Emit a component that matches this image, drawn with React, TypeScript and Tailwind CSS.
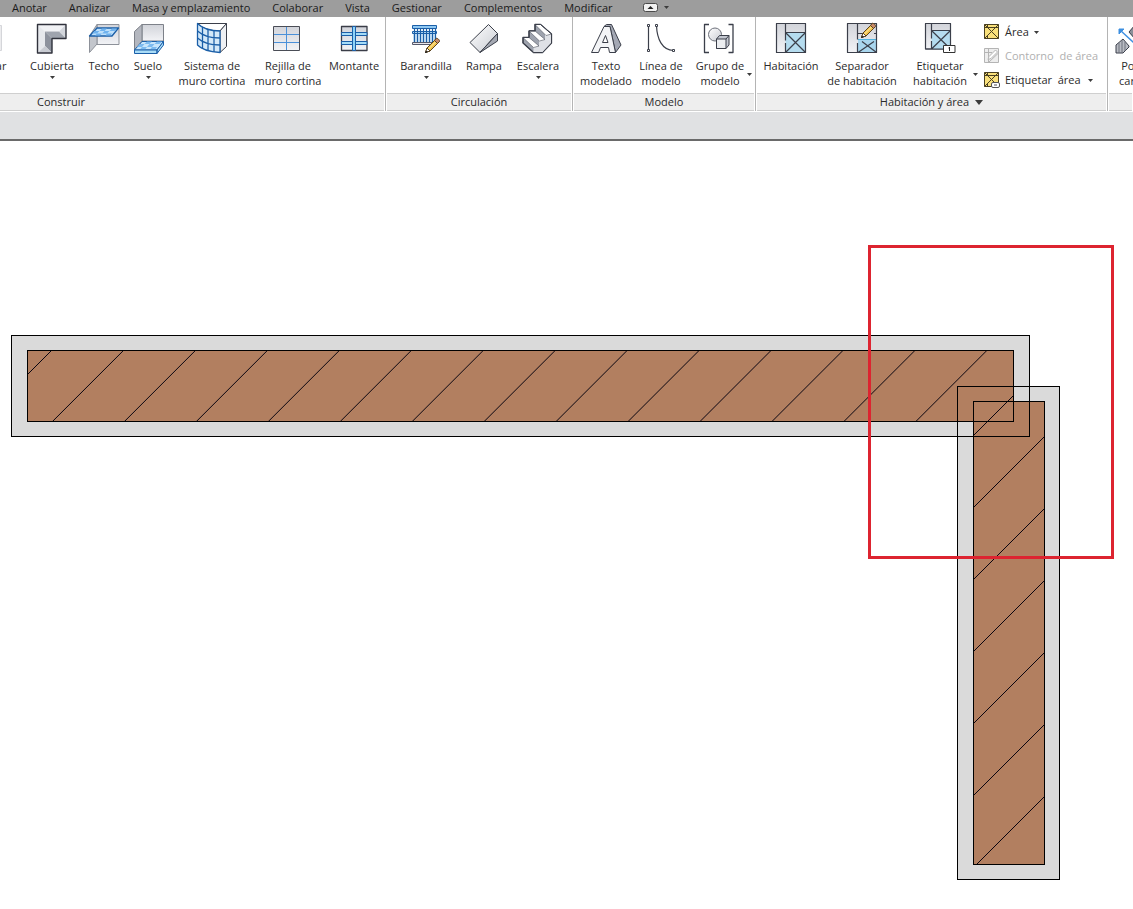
import type { ReactNode } from "react";
import clsx from "clsx";

const INK = "#3b3f4a";
const BLUE = "#1b5fa8";

const tabs = [
  "Anotar",
  "Analizar",
  "Masa y emplazamiento",
  "Colaborar",
  "Vista",
  "Gestionar",
  "Complementos",
  "Modificar",
];

/* Icons */

function Icon({ children }: { children: ReactNode }) {
  return (
    <svg
      className="h-8 w-8 shrink-0 overflow-visible"
      viewBox="0 0 32 32"
      fill="none"
      stroke={INK}
      strokeWidth="1"
      strokeLinejoin="round"
      aria-hidden="true"
    >
      <defs>
        <linearGradient id="steel" x1="0" y1="0" x2="1" y2="1">
          <stop offset="0" stopColor="#ffffff" />
          <stop offset="1" stopColor="#c9ccd3" />
        </linearGradient>
        <linearGradient id="steelDown" x1="0" y1="0" x2="0" y2="1">
          <stop offset="0" stopColor="#d2d4da" />
          <stop offset="1" stopColor="#f2f3f6" />
        </linearGradient>
      </defs>
      {children}
    </svg>
  );
}

function Pencil({ x, y }: { x: number; y: number }) {
  return (
    <g transform={`translate(${x} ${y})`}>
      <path d="M0.5 14.5 2 10 11 1l3 3-9 9z" fill="#f3c44c" stroke="#5a4320" />
      <path d="M3.5 11 11.5 3" stroke="#fdeeb0" />
      <path d="M0.5 14.5 2 10l3 3z" fill="#fff" stroke="#5a4320" />
      <path d="M9.5 2.5 11 .5c1-1 4 1.500 3.500 3l-2 2z" fill="#c98a6a" stroke="#5a4320" />
      <path d="M.5 14.500l1-1.500 .8.8z" fill="#222" stroke="#222" />
    </g>
  );
}

const PilarIcon = () => (
  <Icon>
    <path d="M12 2.500h10.500v25H12z" fill="#ececee" stroke="#d5d6da" />
  </Icon>
);

const CubiertaIcon = () => (
  <Icon>
    <path d="M1.500 1.500 9 8.500h14l7-7z" fill="#f1f2f5" stroke="none" />
    <path d="M23 8.500l7-7v14z" fill="#d3d6dc" stroke="none" />
    <path d="M9 8.500h14l7 7H16z" fill="#9fa4ae" stroke="none" />
    <path d="M1.500 1.500 9 8.500V23l-7.500 7z" fill="#e6e8ec" stroke="none" />
    <path d="M9 8.500l7 7V30L9 23z" fill="#8d929d" stroke="none" />
    <path d="M1.500 30 9 23l7 7z" fill="#c8cbd2" stroke="none" />
    <path d="M1.500 1.500h28.500v14H16V30H1.500z" stroke="#30323c" strokeWidth="1.400" />
  </Icon>
);

const TechoIcon = () => (
  <Icon>
    <path d="M9 1.500h22v20H9z" fill="url(#steelDown)" stroke="#8d9199" />
    <path d="M1.500 13 9 1.500V21l-7.500 8.500z" fill="#c3c6cc" stroke="#8d9199" />
    <path d="M1.500 13 9 5h21.500L24 13z" fill="#bfe0fa" stroke={BLUE} strokeWidth="1.300" />
    <path d="M6.500 8h5L9 10.500H4zM14 5.500h5L16.500 8h-5zM16.500 8h5L19 10.500h-5zM24 5.500h5L26.500 8h-5zM9 10.500h5L12 12.500H7zM19 10.500h5l-1.500 2h-5z" fill="#6fb2ee" stroke="none" />
  </Icon>
);

const SueloIcon = () => (
  <Icon>
    <path d="M10 1.500h21.500V18H10z" fill="url(#steelDown)" stroke="#7d8189" />
    <path d="M2.500 8.500 10 1.500V18l-7.500 9z" fill="#b4b7bf" stroke="#7d8189" />
    <path d="M2.500 27 10 18.500h21.500L25 27z" fill="#c9e6fc" stroke={BLUE} />
    <path d="M7.500 21h5L10 24H5zM15 18.500h5L17.500 21h-5zM17.500 21h5L20 24h-5zM25 18.500h5L27.500 21h-5zM10 24h5l-2 2.500H8zM20 24h5l-2 2.500h-5z" fill="#7cbaf0" stroke="none" />
    <path d="M2.500 27H25v3.500H2.500zM25 27l6.500-8.500V22L25 30.500z" fill="#a9dcf7" stroke={BLUE} />
  </Icon>
);

const MuroCortinaIcon = () => (
  <Icon>
    <path d="M1.500.5H30.500L24 8C16 8 7 6 1.500.5z" fill="#fff" stroke={INK} />
    <path d="M24 8 30.500.5V23.500L24 29.500z" fill="#eef0f3" stroke={INK} />
    <path d="M1.500.5C7 6 16 8 24 8v21.500C16 29 7 28 1.500 22z" fill="#d4e9f9" stroke={BLUE} strokeWidth="1.300" />
    <path d="M6.500 4v22M12 6.500V28M18 7.500V29M1.500 8C7 13 16 15 24 15M1.500 15C7 20 16 22 24 22" stroke={BLUE} strokeWidth="1.300" />
  </Icon>
);

const RejillaIcon = () => (
  <Icon>
    <path d="M1.500 3.500h26v24h-26z" fill="url(#steelDown)" stroke="#4a4d56" />
    <path d="M14.500 4v23M2 11.500h25M2 19.500h25" stroke="#4a90d9" />
  </Icon>
);

const MontanteIcon = () => (
  <Icon>
    <path d="M3.500 3.500h25.500v24H3.500z" fill="url(#steelDown)" stroke="#3a3d47" strokeWidth="1.300" />
    <path d="M3.500 9.500H29v3H3.500zM3.500 18.500H29v3H3.500z" fill="#a5dcf7" stroke={BLUE} />
    <path d="M14.500 3.500h3v24h-3z" fill="#8fd3f7" stroke={BLUE} />
  </Icon>
);

const BarandillaIcon = () => (
  <Icon>
    <path d="M3 8h23v11H3z" fill="#cfe6f8" stroke="none" />
    <path d="M2.500 2.500h24v3h-24z" fill="#8fc8f2" stroke={BLUE} />
    <path d="M2.500 8.500h24v2h-24z" fill="#b9def7" stroke={BLUE} />
    <path d="M4.500 5v14M7.500 5v14M10.500 5v14M13.500 5v14M16.500 5v14M19.500 5v14M22.500 5v14M25.500 5v14" stroke={BLUE} strokeWidth="1.200" />
    <path d="M2.500 19.500h24v2h-24z" fill="#e8e8ee" stroke="#55586a" />
    <Pencil x={15} y={15} />
  </Icon>
);

const RampaIcon = () => (
  <Icon>
    <path d="M20.500 1.500 29.500 10.500 12 29.500 2 19.500z" fill="url(#steel)" />
    <path d="M29.500 10.500V18L12 29.500z" fill="#a4a8b2" />
  </Icon>
);

const EscaleraIcon = () => (
  <Icon>
    <path d="M13 1.500h5.500l11 9.500v9l-9 9.500h-9L1 20v-5.500h6V8h6z" fill="#9ea3ae" strokeWidth="1.300" />
    <path d="M29.500 11v9l-9 9.500h-9V24l5.500-1v-5.500l6-1V12z" fill="#dfe1e6" stroke="none" />
    <path d="M13 1.500h5.500L29.500 11 24 12.500zM7 8h6l10 8.500-5.500 1.500zM1 14.500h6L17 23l-5.500 1.500z" fill="#fff" strokeWidth=".5" />
    <path d="M13 1.500h5.500l11 9.500v9l-9 9.500h-9L1 20v-5.500h6V8h6z" />
  </Icon>
);

const TextoIcon = () => (
  <Icon>
    <path d="M14 3.500 16.500 1.500h5L31 22l-5.500 7.500L20 3.500z" fill="#a4a8b4" />
    <path d="M14 3.500h6l5.500 26H19.500L18.500 24.500H10.500L8.500 29.500h-7zM15.500 12.500 12.500 19.500H18z" fill="#f3f4f6" fillRule="evenodd" />
  </Icon>
);

const LineaIcon = () => (
  <Icon>
    <path d="M3.500 2.500v25M11.500 2.500C12 16 17 27 28.500 27.500" strokeWidth="1.200" />
    <path d="M2.500 1.500h2v2h-2zM2.500 26.500h2v2h-2zM10.500 1.500h2v2h-2zM27.500 26.500h2v2h-2z" fill="#fff" />
  </Icon>
);

const GrupoIcon = () => (
  <Icon>
    <path d="M5 1.500H.5v28H5M24.500 1.500h4.500v28h-4.500" strokeWidth="1.300" />
    <circle cx="11" cy="11.500" r="6.500" fill="url(#steel)" stroke="#6d717b" />
    <path d="M12.500 16l3-3.500h9.500V22l-3 3.500h-9.500z" fill="#c3c7d0" />
    <path d="M12.500 16h9.500v9.500h-9.500z" fill="#eceef1" />
    <path d="M22 16l3-3.500" />
  </Icon>
);

const HabitacionIcon = () => (
  <Icon>
    <path d="M1.500.5h29v29h-29z" fill="url(#steelDown)" />
    <path d="M10.500 9.500h20v20h-20z" fill="#b5dcef" stroke="none" />
    <path d="M1.500.5h29v29h-29zM10.500.5v17M10.500 20v9.500M10.500 9.500h20M10.500 9.500l20 20M30.500 9.500l-20 20" strokeWidth="1.200" />
  </Icon>
);

const SeparadorIcon = () => (
  <Icon>
    <path d="M1.500.5h29v29h-29z" fill="url(#steelDown)" />
    <path d="M12 17h18.500v12.500H12z" fill="#a9d6ee" stroke="none" />
    <path d="M12 16.500h18.500" stroke="#52b4e0" />
    <path d="M1.500.5h29v29h-29zM11.500.5v16M11.500 20v9.500M12 10.500h6M28 10.500h2.500M12 29.500l16-11M30.500 29.500 16 18.500" strokeWidth="1.200" />
    <Pencil x={15} y={0} />
  </Icon>
);

const EtiquetarIcon = () => (
  <Icon>
    <path d="M1.500.5h25v25.500h-25z" fill="url(#steelDown)" />
    <path d="M7.500 7.500h19V26h-19z" fill="#b5dcef" stroke="none" />
    <path d="M1.500.5h25v25.500h-25zM7.500.5v15M7.500 18v8M7.500 7.500h19M7.500 7.500l19 18.500M26.500 7.500l-19 18.500" strokeWidth="1.200" />
    <path d="M19.500 22.500h11.500v7H19.500z" fill="#fff" stroke="#333" />
    <path d="M25.500 24v4M24.500 25h1" stroke="#222" />
  </Icon>
);

const PorCaraIcon = () => (
  <Icon>
    <path d="M2 22 9 16l6 7v1l-6 6H2z" fill="#b9bcc3" />
    <path d="M5 20v10M8 17v13M11 19v9" stroke="#6f737c" />
    <path d="M15 9l6-7v14z" fill="#8b8f99" />
    <path d="M6 7l14 13" stroke="#3d8fe0" strokeWidth="1.400" />
    <path d="M5 6h5l-5 5z" fill="#3d8fe0" stroke="#3d8fe0" />
  </Icon>
);

function AreaIcon({ variant }: { variant: "area" | "contorno" | "etiqueta" }) {
  const off = variant === "contorno";
  const ink = off ? "#b4b4b4" : "#4a4020";
  return (
    <svg className="h-4 w-4 shrink-0 overflow-visible" viewBox="0 0 16 16" fill="none" stroke={ink} aria-hidden="true">
      <path d="M.5.5h14v14H.5z" fill={off ? "#ededed" : "#f9e07a"} />
      {off ? (
        <>
          <path d="M.5 4.500H8M4.500 1v13M5 14l9.500-9" />
          <path d="M4 11.500 5 8.500 11.500 2l2 2L7 10.500z" fill="#fff" />
        </>
      ) : (
        <path d="M3.500.5v3M.5 3.500h14M3.500 3.500l11 11M14.500.5l-14 14M.5.5l5 5M3.500 12v2.500" />
      )}
      {variant === "etiqueta" && (
        <>
          <rect x="7.500" y="10.500" width="8" height="5" rx="1.500" fill="#fff" stroke="#555" />
          <path d="M10 13h3" stroke="#555" />
        </>
      )}
    </svg>
  );
}

function Caret({ className }: { className?: string }) {
  return (
    <svg className={clsx("h-[3px] w-[5px] shrink-0", className)} viewBox="0 0 5 3" fill="#3c3c3c" aria-hidden="true">
      <path d="M0 0h5L2.500 3z" />
    </svg>
  );
}

/* Ribbon */

type ToolProps = {
  icon: ReactNode;
  lines: string[];
  width: string;
  menu?: "below" | "side";
};

function Tool({ icon, lines, width, menu }: ToolProps) {
  return (
    <button type="button" className={clsx("relative flex shrink-0 flex-col items-center", width)}>
      {icon}
      <span className="mt-[3px] flex flex-col items-center leading-[15px] whitespace-nowrap">
        {lines.map((line) => (
          <span key={line}>{line}</span>
        ))}
      </span>
      {menu === "below" && <Caret className="mt-[3px]" />}
      {menu === "side" && <Caret className="absolute -right-0.5 bottom-3" />}
    </button>
  );
}

type PanelProps = {
  title: string;
  className?: string;
  bodyClass?: string;
  titleClass?: string;
  expandable?: boolean;
  children: ReactNode;
};

function Panel({ title, className, bodyClass, titleClass, expandable, children }: PanelProps) {
  return (
    <section aria-label={title} className={clsx("flex flex-col overflow-hidden border-[#b4b4b4]", className)}>
      <div className={clsx("flex h-[76px] items-start gap-2 pt-1.5", bodyClass)}>{children}</div>
      <h2
        className={clsx(
          "mr-px flex h-[18px] items-center gap-1.5 border-y border-[#cfcfcf] bg-[#eeeeee]",
          titleClass ?? "ml-px justify-center",
        )}
      >
        {title}
        {expandable && (
          <svg className="h-[5px] w-2" viewBox="0 0 8 5" fill="#3c3c3c" aria-hidden="true">
            <path d="M0 0h8L4 5z" />
          </svg>
        )}
      </h2>
    </section>
  );
}

function Ribbon() {
  return (
    <div className="flex overflow-hidden bg-white pb-px">
      <Panel
        title="Construir"
        className="w-[386px] shrink-0 border-r"
        bodyClass="justify-end pr-[3px]"
        titleClass="pl-[37px]"
      >
        <Tool icon={<PilarIcon />} lines={["Pilar"]} width="w-[46px]" />
        <Tool icon={<CubiertaIcon />} lines={["Cubierta"]} width="w-[52px]" menu="below" />
        <Tool icon={<TechoIcon />} lines={["Techo"]} width="w-9" />
        <Tool icon={<SueloIcon />} lines={["Suelo"]} width="w-9" menu="below" />
        <Tool icon={<MuroCortinaIcon />} lines={["Sistema de", "muro cortina"]} width="w-[76px]" />
        <Tool icon={<RejillaIcon />} lines={["Rejilla de", "muro cortina"]} width="w-[60px]" />
        <Tool icon={<MontanteIcon />} lines={["Montante"]} width="w-14" />
      </Panel>
      <Panel title="Circulación" className="shrink-0 border-r" bodyClass="pr-3 pl-3.5">
        <Tool icon={<BarandillaIcon />} lines={["Barandilla"]} width="w-[52px]" menu="below" />
        <Tool icon={<RampaIcon />} lines={["Rampa"]} width="w-12" />
        <Tool icon={<EscaleraIcon />} lines={["Escalera"]} width="w-11" menu="below" />
      </Panel>
      <Panel title="Modelo" className="shrink-0 border-r" bodyClass="pr-[5px] pl-[7px]">
        <Tool icon={<TextoIcon />} lines={["Texto", "modelado"]} width="w-[52px]" />
        <Tool icon={<LineaIcon />} lines={["Línea de", "modelo"]} width="w-[42px]" />
        <Tool icon={<GrupoIcon />} lines={["Grupo de", "modelo"]} width="w-[60px]" menu="side" />
      </Panel>
      <Panel title="Habitación y área" className="w-[352px] shrink-0 border-r" bodyClass="pl-1.5" expandable>
        <Tool icon={<HabitacionIcon />} lines={["Habitación"]} width="w-[58px]" />
        <Tool icon={<SeparadorIcon />} lines={["Separador", "de habitación"]} width="w-[68px]" />
        <Tool icon={<EtiquetarIcon />} lines={["Etiquetar", "habitación"]} width="w-[72px]" menu="side" />
        <div className="-mt-[3px] flex flex-col">
          <button type="button" className="flex h-6 items-center gap-[5px]">
            <AreaIcon variant="area" />
            Área
            <Caret />
          </button>
          <button type="button" disabled className="flex h-6 items-center gap-[5px] whitespace-pre text-[#b0b0b0]">
            <AreaIcon variant="contorno" />
            {"Contorno  de área"}
          </button>
          <button type="button" className="flex h-6 items-center gap-[5px] whitespace-pre">
            <AreaIcon variant="etiqueta" />
            {"Etiquetar  área"}
            <Caret className="ml-0.5" />
          </button>
        </div>
      </Panel>
      <Panel title="" className="min-w-0 flex-1" bodyClass="pl-1.5">
        <Tool icon={<PorCaraIcon />} lines={["Por", "cara"]} width="w-8" />
      </Panel>
    </div>
  );
}

/* Plan view */

const HATCH = "#0a0510";

// 45 degree hatch: every line satisfies x + y = 402 + 72k
const wallHatch = Array.from({ length: 14 }, (_, k) => {
  const sum = 402 + 71.95 * k;
  const x1 = Math.max(27.5, sum - 421.5);
  return { x1, y1: sum - x1, x2: sum - 350.5, y2: 350.5 };
});

const returnHatch = Array.from({ length: 6 }, (_, k) => {
  const sum = 1481 + 72 * k;
  const y1 = Math.min(864.5, sum - 973.5);
  return { x1: sum - y1, y1, x2: 1044.5, y2: sum - 1044.5 };
});

function PlanView() {
  return (
    <svg className="block h-auto w-full" viewBox="0 141 1133 768" role="img" aria-label="Planta de muros">
      <g fill="#dadada">
        <rect x="11.5" y="335.5" width="1018" height="101" />
        <rect x="957.5" y="386.5" width="102" height="493" />
      </g>
      <g fill="#b27f60">
        <rect x="27.5" y="350.5" width="986" height="71" />
        <rect x="973.5" y="401.5" width="71" height="463" />
      </g>
      <g stroke={HATCH} strokeWidth="1">
        {[...wallHatch, ...returnHatch].map((line, i) => (
          <line key={i} {...line} />
        ))}
        <line x1="973.5" y1="435.5" x2="1013.5" y2="395.5" />
      </g>
      <g fill="none" stroke="#000" strokeWidth="1">
        <rect x="11.5" y="335.5" width="1018" height="101" />
        <rect x="27.5" y="350.5" width="986" height="71" />
        <rect x="957.5" y="386.5" width="102" height="493" />
        <rect x="973.5" y="401.5" width="71" height="463" />
      </g>
      <rect x="869.5" y="246.5" width="243" height="311" fill="none" stroke="#dd2430" strokeWidth="3" />
    </svg>
  );
}

export default function App() {
  return (
    <div className="min-h-screen overflow-hidden bg-white font-['Open_Sans','Noto_Sans',sans-serif] text-[11px] text-[#2b2b2b]">
      <nav className="flex h-[17px] items-center gap-[22px] overflow-hidden bg-[#9d9d9d] pb-0.5 pl-3 leading-[15px] whitespace-nowrap text-[#1a1a1a]">
        {tabs.map((tab) => (
          <button key={tab} type="button">
            {tab}
          </button>
        ))}
        <button type="button" aria-label="Minimizar cinta" className="ml-2 flex items-center gap-1.5">
          <svg className="h-[9px] w-[15px]" viewBox="0 0 15 9" aria-hidden="true">
            <rect x=".5" y=".5" width="14" height="8" rx="2" fill="#f2f2f2" stroke="#4a4a4a" />
            <path d="M4.500 6h6l-3-3z" fill="#222" />
          </svg>
          <Caret />
        </button>
      </nav>
      <Ribbon />
      <div className="h-[29px] border-b-2 border-[#6a6a6a] bg-[#e0e1e3]" />
      <main>
        <PlanView />
      </main>
    </div>
  );
}
